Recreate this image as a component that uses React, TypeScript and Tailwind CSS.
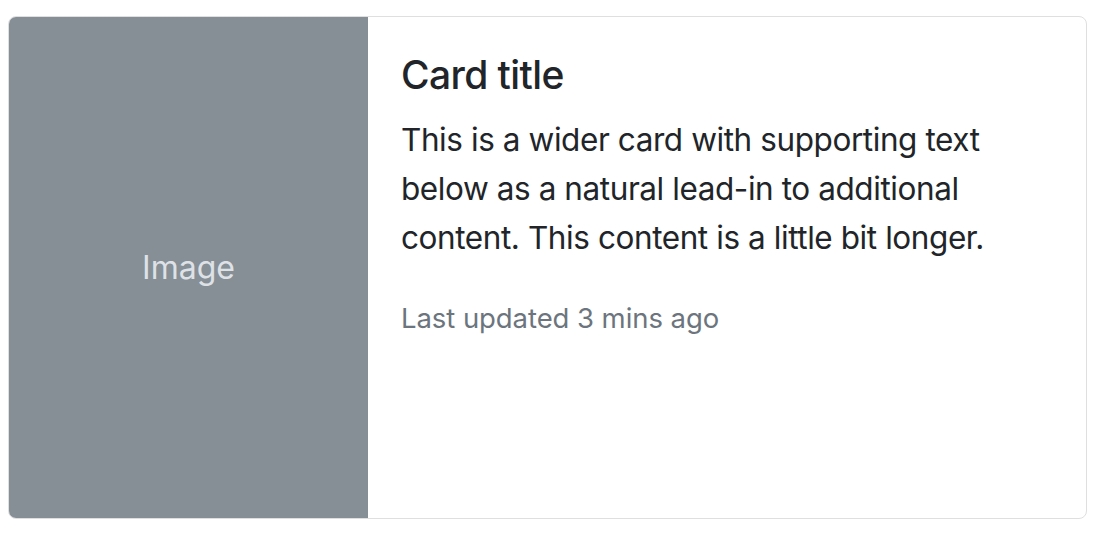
export default function App() {
  return (
    <div className="pt-4 pl-2" style={{ fontFamily: "Inter, 'Noto Sans', sans-serif" }}>
      <div className="flex h-[503px] w-[1079px] overflow-hidden rounded-[8px] border border-[#dfdfdf] bg-white">
        <div className="flex w-[359px] shrink-0 items-center justify-center bg-[#868e96]">
          <span className="text-[32px] text-[#dee2e6]">Image</span>
        </div>
        <div className="p-[33px] text-[#212529]">
          <h5 className="mb-[16px] text-[39px] font-medium leading-[49px] tracking-[-0.6px]">
            Card title
          </h5>
          <p className="mb-[32px] text-[31.5px] leading-[49px] tracking-[-0.42px]">
            This is a wider card with supporting text below as a natural lead-in to additional content.
            This content is a little bit longer.
          </p>
          <p className="text-[27.5px] leading-[49px] text-[#6c757d] tracking-[-0.07px]">
            Last updated 3 mins ago
          </p>
        </div>
      </div>
    </div>
  );
}
